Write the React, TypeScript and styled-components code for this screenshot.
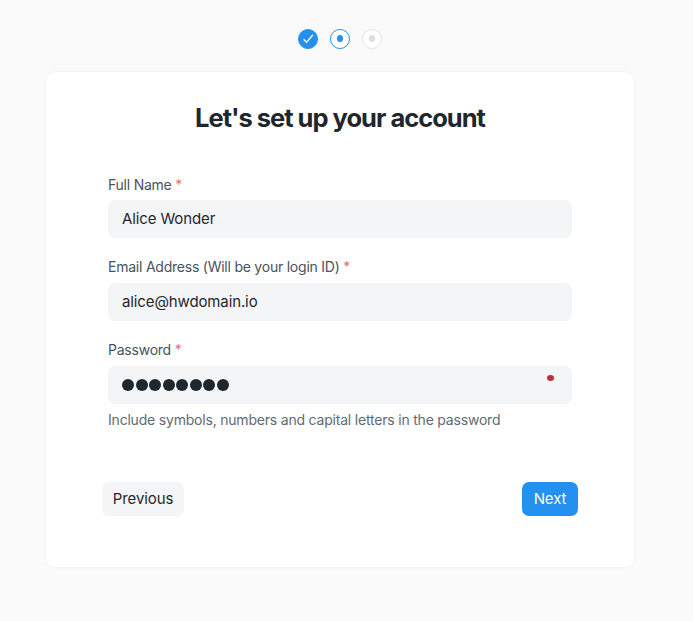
import React from "react";
import styled, { createGlobalStyle } from "styled-components";

const Global = createGlobalStyle`
  * { box-sizing: border-box; }
  body { margin: 0; background: #fafafa; font-family: Inter, "Liberation Sans", sans-serif; color: #1f272e; }
`;

const Page = styled.main`
  width: 680px;
  height: 621px;
  padding-top: 29px;
  display: flex;
  flex-direction: column;
  align-items: center;
`;

const Steps = styled.div`
  display: flex;
  gap: 12px;
  height: 20px;
`;

const Step = styled.div<{ $state: "done" | "active" | "pending" }>`
  width: 20px;
  height: 20px;
  border-radius: 50%;
  display: flex;
  align-items: center;
  justify-content: center;
  border: 1px solid ${(p) => (p.$state === "pending" ? "#e2e4e6" : "#2490ef")};
  background: ${(p) => (p.$state === "done" ? "#2490ef" : "#fff")};
`;

const Dot = styled.span<{ $active?: boolean }>`
  width: 6px;
  height: 7px;
  margin-bottom: 1px;
  border-radius: 50%;
  background: ${(p) => (p.$active ? "#2490ef" : "#dcdee0")};
`;

const Card = styled.section`
  margin-top: 22px;
  width: 590px;
  height: 497px;
  border: 1px solid #f5f5f6;
  border-radius: 10px;
  background: #fff;
  padding: 28px 56px 0;
  box-shadow: 0 0 2px rgba(25, 39, 52, 0.03);
`;

const Title = styled.h1`
  margin: 0;
  font-size: 25.5px;
  line-height: 36px;
  font-weight: 650;
  letter-spacing: -1px;
  text-align: center;
`;

const Form = styled.form`
  margin: 40px 6px 0 6px;
  height: 306px;
`;

const Label = styled.label`
  font-size: 14px;
  line-height: 18px;
  margin-bottom: 6px;
  letter-spacing: -0.23px;
  color: #48535b;
`;

const Field = styled.div`
  display: flex;
  flex-direction: column;
  height: 83px;

  & + & ${Label} {
    line-height: 16px;
    margin-bottom: 8px;
  }
`;

const Required = styled.span`
  color: #e0736c;
`;

const Control = styled.div`
  height: 38px;
  flex: none;
  border-radius: 7px;
  background: #f4f5f6;
  padding: 0 18px 1px 14px;
  display: flex;
  align-items: center;
  justify-content: space-between;
  font-size: 15px;
  font-weight: 440;
  letter-spacing: -0.12px;
`;

const Mask = styled.div`
  display: flex;
  gap: 1.5px;
`;

const Bullet = styled.span`
  width: 12px;
  height: 12px;
  border-radius: 50%;
  background: #1f272e;
`;

const Strength = styled.span`
  width: 7px;
  height: 6px;
  border-radius: 50%;
  background: #bd3039;
  margin-bottom: 13px;
`;

const Hint = styled.p`
  margin: 7px 0 0;
  font-size: 14px;
  line-height: 18px;
  letter-spacing: -0.2px;
  color: #626b70;
`;

const Actions = styled.div`
  display: flex;
  justify-content: space-between;
`;

const Button = styled.button<{ $primary?: boolean }>`
  width: ${(p) => (p.$primary ? 56 : 82)}px;
  height: 34px;
  padding: 0 0 1px;
  border: 0;
  border-radius: 7px;
  font: 400 15px Inter, sans-serif;
  letter-spacing: -0.1px;
  color: ${(p) => (p.$primary ? "#fff" : "#1f272e")};
  background: ${(p) => (p.$primary ? "#2490ef" : "#f4f5f6")};
`;

export default function App() {
  return (
    <Page>
      <Global />
      <Steps>
        <Step $state="done">
          <svg width="12" height="10" viewBox="0 0 12 10" fill="none" stroke="#fff" strokeWidth="1.4" strokeLinecap="round" strokeLinejoin="round">
            <path d="M2 5.6 4.5 8.4 10.5 1.2" />
          </svg>
        </Step>
        <Step $state="active"><Dot $active /></Step>
        <Step $state="pending"><Dot /></Step>
      </Steps>
      <Card>
        <Title>Let's set up your account</Title>
        <Form>
          <Field>
            <Label>Full Name <Required>*</Required></Label>
            <Control>Alice Wonder</Control>
          </Field>
          <Field>
            <Label>Email Address (Will be your login ID) <Required>*</Required></Label>
            <Control>alice@hwdomain.io</Control>
          </Field>
          <Field>
            <Label>Password <Required>*</Required></Label>
            <Control>
              <Mask>{Array.from({ length: 8 }, (_, i) => <Bullet key={i} />)}</Mask>
              <Strength />
            </Control>
            <Hint>Include symbols, numbers and capital letters in the password</Hint>
          </Field>
        </Form>
        <Actions>
          <Button type="button">Previous</Button>
          <Button type="button" $primary>Next</Button>
        </Actions>
      </Card>
    </Page>
  );
}
